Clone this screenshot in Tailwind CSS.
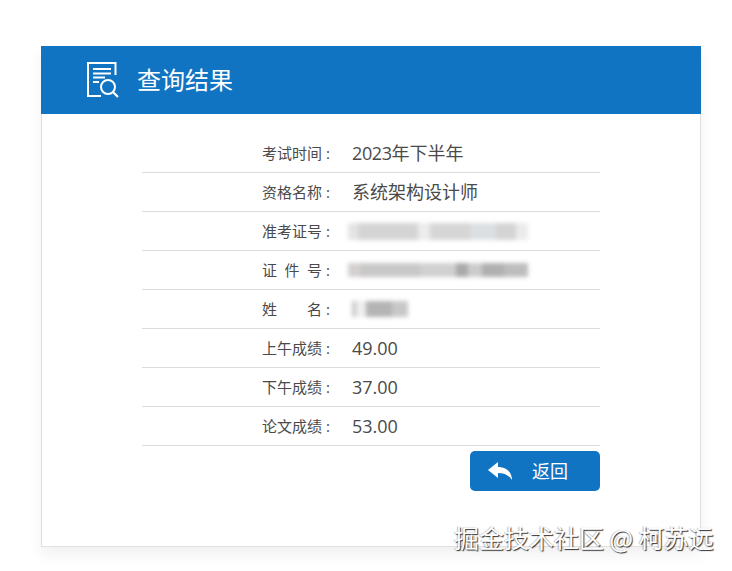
<!DOCTYPE html>
<html>
  <head>
    <meta charset="UTF-8">
    <meta name="viewport" content="width=device-width, initial-scale=1.0">
    <title>查询结果</title>
    <script src="https://cdn.jsdelivr.net/npm/@tailwindcss/browser@4"></script>
  </head>
  <body class="bg-white m-0 p-0 relative h-[571px] overflow-hidden font-['Open_Sans','Noto_Sans_CJK_SC',sans-serif] text-[#4a4a4a]">
    <main class="pt-[46px] pl-[41px]">
      <section class="w-[660px] h-[501px] bg-white border-x border-b border-[#e0e0e0] shadow-[0_8px_14px_rgba(0,0,0,0.06)]">
        <header class="bg-[#1174c3] -mx-px h-[68px] flex items-center pl-[46px] text-white">
          <svg class="w-[32px] h-[36px]" viewBox="0 0 32 36" fill="none" stroke="currentColor" stroke-width="2">
            <path d="M14 34H1V1H28.500V13"/>
            <path d="M6 7H24M6 11.500H24M6 15.500H18M6 20H12"/>
            <circle cx="21" cy="25" r="7"/>
            <path d="M26 30L31 35" stroke-width="2.200"/>
          </svg>
          <h1 class="ml-[18px] text-[24px] font-normal leading-none mt-[-1px]">查询结果</h1>
        </header>

        <div class="mx-[100px] pt-[20px]">
          <div class="h-[39px] border-b border-[#dcdcdc] flex items-center">
            <span class="pl-[120px] w-[210px] text-[15px]">考试时间<span class="ml-[4px]">:</span></span>
            <span class="text-[18px] leading-none"><span class="tracking-[-0.4px]">2023</span>年下半年</span>
          </div>
          <div class="h-[39px] border-b border-[#dcdcdc] flex items-center">
            <span class="pl-[120px] w-[210px] text-[15px]">资格名称<span class="ml-[4px]">:</span></span>
            <span class="text-[18px] leading-none">系统架构设计师</span>
          </div>
          <div class="h-[39px] border-b border-[#dcdcdc] flex items-center">
            <span class="pl-[120px] w-[206px] text-[15px]">准考证号<span class="ml-[4px]">:</span></span>
            <div class="flex w-[180px] h-[17px] blur-[2px]">
              <div class="w-[10px] bg-[#e4e4e4]"></div>
              <div class="w-[60px] bg-[#d4d4d4]"></div>
              <div class="w-[12px] bg-[#ececec]"></div>
              <div class="w-[40px] bg-[#d6d6d6]"></div>
              <div class="w-[26px] bg-[#dcdfe2]"></div>
              <div class="w-[20px] bg-[#d4d4d4]"></div>
              <div class="w-[12px] bg-[#ebebeb]"></div>
            </div>
          </div>
          <div class="h-[39px] border-b border-[#dcdcdc] flex items-center">
            <span class="pl-[120px] w-[206px] text-[15px] flex"><span class="flex justify-between w-[60px]"><span>证</span><span>件</span><span>号</span></span><span class="ml-[4px]">:</span></span>
            <div class="flex w-[180px] h-[14px] blur-[2px]">
              <div class="w-[12px] bg-[#d5d0d0]"></div>
              <div class="w-[60px] bg-[#c8c8c8]"></div>
              <div class="w-[36px] bg-[#d0d0d0]"></div>
              <div class="w-[12px] bg-[#aaaaaa]"></div>
              <div class="w-[14px] bg-[#cccccc]"></div>
              <div class="w-[22px] bg-[#b0b0b0]"></div>
              <div class="w-[24px] bg-[#bdbdbd]"></div>
            </div>
          </div>
          <div class="h-[39px] border-b border-[#dcdcdc] flex items-center">
            <span class="pl-[120px] w-[210px] text-[15px] flex"><span class="flex justify-between w-[60px]"><span>姓</span><span>名</span></span><span class="ml-[4px]">:</span></span>
            <div class="flex w-[56px] h-[16px] blur-[2px]">
              <div class="w-[4px] bg-[#c8c8c8]"></div>
              <div class="w-[10px] bg-[#eeeeee]"></div>
              <div class="w-[26px] bg-[#b4b4b4]"></div>
              <div class="w-[16px] bg-[#c8c8c8]"></div>
            </div>
          </div>
          <div class="h-[39px] border-b border-[#dcdcdc] flex items-center">
            <span class="pl-[120px] w-[210px] text-[15px]">上午成绩<span class="ml-[4px]">:</span></span>
            <span class="text-[18px] leading-none">49.00</span>
          </div>
          <div class="h-[39px] border-b border-[#dcdcdc] flex items-center">
            <span class="pl-[120px] w-[210px] text-[15px]">下午成绩<span class="ml-[4px]">:</span></span>
            <span class="text-[18px] leading-none">37.00</span>
          </div>
          <div class="h-[39px] border-b border-[#dcdcdc] flex items-center">
            <span class="pl-[120px] w-[210px] text-[15px]">论文成绩<span class="ml-[4px]">:</span></span>
            <span class="text-[18px] leading-none">53.00</span>
          </div>
          <div class="flex justify-end pt-[5px]">
            <button class="w-[130px] h-[40px] bg-[#1174c3] rounded-[5px] text-white text-[18px] flex items-center pl-[18px]">
              <svg class="w-[24px] h-[18px]" viewBox="0 0 24 18" fill="currentColor">
                <path d="M0 8L10 0V5C18 5 24 10 24 18C21 13 16 11 10 11V16Z"/>
              </svg>
              <span class="ml-[20px]">返回</span>
            </button>
          </div>
        </div>
      </section>
    </main>
    <div class="absolute left-[454px] top-[520px] text-[25px] leading-[34px] whitespace-nowrap text-white font-['Noto_Sans_CJK_SC',sans-serif] [text-shadow:1px_1px_1px_rgba(0,0,0,0.8),-1px_0_1px_rgba(0,0,0,0.25)]">掘金技术社区 @ 柯苏远</div>
  </body>
</html>
